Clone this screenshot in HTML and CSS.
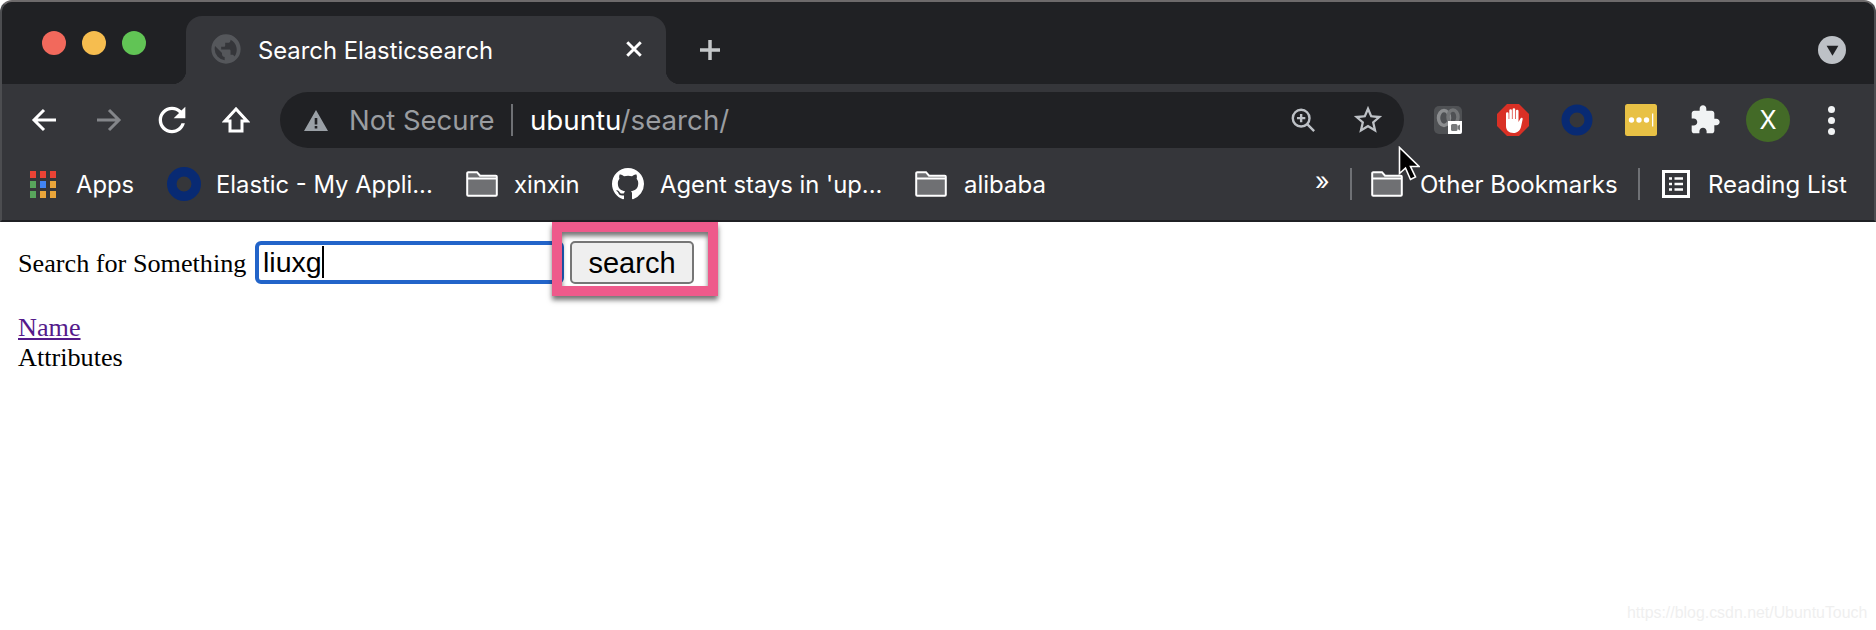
FILE: index.html
```html
<!DOCTYPE html>
<html lang="en">
<head>
<meta charset="utf-8">
<title>Search Elasticsearch</title>
<link rel="stylesheet" href="styles.css">
</head>
<body>
<div class="chrome">
  <div class="tabstrip">
    <div class="lights"><i class="light red"></i><i class="light yellow"></i><i class="light green"></i></div>
    <div class="tab">
      <svg class="globe" viewBox="0 0 24 24"><path fill="#55575b" d="M12 1a11 11 0 1 0 0 22 11 11 0 0 0 0-22zM3.500 12c0-.8.1-1.500.3-2.200L9 15v1c0 1.100.9 2 2 2v2.400A8.500 8.500 0 0 1 3.500 12zm14.800 5.700c-.3-.8-1-1.300-1.900-1.300h-1v-3c0-.6-.4-1-1-1H8.400v-2h2c.6 0 1-.4 1-1v-2h2c1.100 0 2-.9 2-2v-.4a8.500 8.500 0 0 1 2.900 12.700z"/></svg>
      <span class="tab-title">Search Elasticsearch</span>
      <svg class="tab-close" viewBox="0 0 16 16"><path d="M2 2l12 12M14 2L2 14"/></svg>
    </div>
    <svg class="new-tab" viewBox="0 0 24 24"><path d="M12 2v20M2 12h20"/></svg>
    <div class="tab-menu"><svg viewBox="0 0 14 14"><path d="M1.500 2.500h11L7 12z"/></svg></div>
  </div>
  <div class="toolbar">
    <svg class="nav" viewBox="0 0 28 28"><path d="M25 14H4M13 4L3 14l10 10"/></svg>
    <svg class="nav dim" viewBox="0 0 28 28"><path d="M3 14h21M15 4l10 10-10 10"/></svg>
    <svg class="nav fill" viewBox="0 0 24 24"><path d="M17.650 6.350C16.200 4.900 14.210 4 12 4c-4.420 0-7.990 3.580-7.990 8s3.570 8 7.990 8c3.730 0 6.840-2.550 7.730-6h-2.080c-.82 2.330-3.040 4-5.650 4-3.310 0-6-2.690-6-6s2.690-6 6-6c1.660 0 3.140.69 4.220 1.780L13 11h7V4l-2.350 2.350z"/></svg>
    <svg class="nav" viewBox="0 0 28 28"><path d="M14 3L3 15h5v10h12V15h5z"/></svg>
    <div class="omnibox">
      <svg class="warn" viewBox="0 0 24 24"><path d="M12 2L0 23h24L12 2zm-1.300 8h2.600v6.500h-2.600V10zm0 8h2.600v2.500h-2.600V18z" fill-rule="evenodd"/></svg>
      <span class="not-secure">Not Secure</span>
      <i class="omni-sep"></i>
      <span class="url"><b>ubuntu</b>/search/</span>
      <svg class="omni-zoom" viewBox="0 0 28 28"><circle cx="12" cy="12" r="9"/><path d="M18.500 18.500L26 26M12 7.500v9M7.500 12h9"/></svg>
      <svg class="omni-star" viewBox="0 0 24 24"><path d="M22 9.240l-7.190-.62L12 2 9.190 8.630 2 9.240l5.460 4.730L5.820 21 12 17.270 18.180 21l-1.630-7.030L22 9.240zM12 15.400l-3.760 2.270 1-4.280-3.320-2.880 4.380-.38L12 6.100l1.710 4.040 4.380.38-3.320 2.880 1 4.280L12 15.400z"/></svg>
    </div>
    <div class="extensions">
      <div class="ext meet">
        <svg viewBox="0 0 32 32"><rect x="2" y="2" width="28" height="28" rx="5" fill="#4f5154"/><ellipse cx="12" cy="14" rx="5.500" ry="7.500" fill="none" stroke="#8b8d8f" stroke-width="3.500"/><ellipse cx="21" cy="13" rx="5" ry="7" fill="none" stroke="#737577" stroke-width="3.500"/><path d="M16 17h14v11a2 2 0 0 1-2 2H16z" fill="#fff"/><rect x="19" y="20" width="6.500" height="7" rx="1.500" fill="#77797b"/><path d="M25.500 22l2.500-1.500v6l-2.500-1.500z" fill="#77797b"/></svg>
      </div>
      <div class="ext">
        <svg viewBox="0 0 32 32"><path d="M10 0h12l10 10v12L22 32H10L0 22V10z" fill="#d93025"/><path d="M9 17V9.500a1.300 1.300 0 0 1 2.600 0V15h.7V6.500a1.300 1.300 0 0 1 2.600 0V15h.7V5.500a1.300 1.300 0 0 1 2.600 0V15h.7V7a1.300 1.300 0 0 1 2.600 0v11l2-3.500c.8-1.300 2.700-.4 2.100 1L24 23c-1 3.500-3.500 6-7.500 6-5 0-7.500-3-7.500-7z" fill="#fff"/></svg>
      </div>
      <div class="ext">
        <svg viewBox="0 0 32 32"><circle cx="16" cy="16" r="11.500" fill="none" stroke="#082a73" stroke-width="8"/></svg>
      </div>
      <div class="ext">
        <svg viewBox="0 0 32 32"><rect width="32" height="32" rx="2.500" fill="#e8c145"/><circle cx="6.500" cy="16" r="2.700" fill="#fff"/><circle cx="14" cy="16" r="2.700" fill="#fff"/><circle cx="21.500" cy="16" r="2.700" fill="#fff"/><rect x="27" y="9.500" width="1.300" height="13" fill="#fff"/></svg>
      </div>
      <div class="ext">
        <svg viewBox="0 0 24 24"><path fill="#f1f3f4" d="M20.500 11H19V7c0-1.100-.9-2-2-2h-4V3.500C13 2.120 11.880 1 10.500 1S8 2.120 8 3.500V5H4c-1.100 0-1.990.9-1.990 2v3.800H3.500c1.490 0 2.700 1.210 2.700 2.700s-1.210 2.700-2.700 2.700H2V20c0 1.100.9 2 2 2h3.800v-1.500c0-1.490 1.210-2.700 2.700-2.700 1.490 0 2.700 1.210 2.700 2.700V22H17c1.100 0 2-.9 2-2v-4h1.500c1.380 0 2.500-1.120 2.500-2.500S21.880 11 20.500 11z"/></svg>
      </div>
      <div class="avatar">X</div>
      <div class="kebab"><i></i><i></i><i></i></div>
    </div>
  </div>
  <div class="bookmarks">
    <div class="apps-grid">
      <i class="r"></i><i class="r"></i><i class="r"></i>
      <i class="g"></i><i class="b"></i><i class="y"></i>
      <i class="g"></i><i class="y"></i><i class="y"></i>
    </div>
    <span class="bm-label apps-label">Apps</span>
    <svg class="bm-ico elastic" viewBox="0 0 32 32"><circle cx="16" cy="16" r="11.500" fill="none" stroke="#082a73" stroke-width="9"/></svg>
    <span class="bm-label elastic-label">Elastic - My Appli...</span>
    <svg class="bm-ico folder" viewBox="0 0 32 26"><path d="M1.200 2.200a1 1 0 0 1 1-1H11l3 3.500h15.800a1 1 0 0 1 1 1v18a1 1 0 0 1-1 1H2.200a1 1 0 0 1-1-1z" fill="#6f7073" stroke="#fff" stroke-width="2"/><path d="M1.200 7.500h29.600" stroke="#fff" stroke-width="2"/></svg>
    <span class="bm-label xinxin-label">xinxin</span>
    <svg class="bm-ico github" viewBox="0 0 16 16"><path fill="#fff" d="M8 0C3.580 0 0 3.580 0 8c0 3.540 2.290 6.530 5.470 7.590.4.070.55-.17.55-.38 0-.19-.01-.82-.01-1.490-2.010.37-2.530-.49-2.690-.94-.09-.23-.48-.94-.82-1.130-.28-.15-.68-.52-.01-.53.63-.01 1.080.58 1.230.82.72 1.210 1.870.87 2.330.66.070-.52.28-.87.51-1.070-1.780-.2-3.640-.89-3.640-3.950 0-.87.31-1.590.82-2.150-.08-.2-.36-1.020.08-2.120 0 0 .67-.21 2.200.82.64-.18 1.320-.27 2-.27.68 0 1.360.09 2 .27 1.530-1.040 2.200-.82 2.200-.82.44 1.100.16 1.920.08 2.120.51.56.82 1.270.82 2.150 0 3.070-1.870 3.750-3.650 3.950.29.25.54.73.54 1.480 0 1.070-.01 1.930-.01 2.200 0 .21.15.46.55.38A8.013 8.013 0 0 0 16 8c0-4.420-3.580-8-8-8z"/></svg>
    <span class="bm-label agent-label">Agent stays in 'up...</span>
    <svg class="bm-ico folder" viewBox="0 0 32 26"><path d="M1.200 2.200a1 1 0 0 1 1-1H11l3 3.500h15.800a1 1 0 0 1 1 1v18a1 1 0 0 1-1 1H2.200a1 1 0 0 1-1-1z" fill="#6f7073" stroke="#fff" stroke-width="2"/><path d="M1.200 7.500h29.600" stroke="#fff" stroke-width="2"/></svg>
    <span class="bm-label alibaba-label">alibaba</span>
    <span class="chevrons">»</span>
    <i class="bm-sep"></i>
    <svg class="bm-ico folder" viewBox="0 0 32 26"><path d="M1.200 2.200a1 1 0 0 1 1-1H11l3 3.500h15.800a1 1 0 0 1 1 1v18a1 1 0 0 1-1 1H2.200a1 1 0 0 1-1-1z" fill="#6f7073" stroke="#fff" stroke-width="2"/><path d="M1.200 7.500h29.600" stroke="#fff" stroke-width="2"/></svg>
    <span class="bm-label other-label">Other Bookmarks</span>
    <i class="bm-sep second"></i>
    <svg class="bm-ico reading" viewBox="0 0 28 28"><rect x="1.500" y="1.500" width="25" height="25" fill="none" stroke="#fff" stroke-width="3"/><path d="M7 8.500h3M12.500 8.500H21M7 14h3M12.500 14H21M7 19.500h3M12.500 19.500H21" stroke="#fff" stroke-width="2.400"/></svg>
    <span class="bm-label reading-label">Reading List</span>
  </div>
</div>
<main class="page">
  <form class="search-row">
    <label class="search-label">Search for Something</label>
    <div class="search-input">liuxg<i class="caret"></i></div>
    <div class="highlight"></div>
    <button class="search-btn" type="button">search</button>
  </form>
  <a class="name-link" href="#">Name</a>
  <div class="attrs">Attributes</div>
</main>
<svg class="cursor" viewBox="0 0 22 36"><path d="M1.500 1.500v26l6-5.500 5 11.500 5-2.500-5-10.500h8.500z" fill="#000" stroke="#fff" stroke-width="1.600"/></svg>
<div class="watermark">https://blog.csdn.net/UbuntuTouch</div>
</body>
</html>
```
FILE: styles.css
```css
* { box-sizing: border-box; }
html, body { margin: 0; padding: 0; background: #fff; }
body { width: 1876px; height: 630px; overflow: hidden; position: relative; font-family: "Liberation Serif", serif; }
i { display: block; }

.chrome { background: #35363a; font-family: Inter, "Liberation Sans", sans-serif; border-left: 2px solid #4c4d50; border-right: 2px solid #4c4d50; border-top: 2px solid #6d6a6b; border-radius: 12px 12px 0 0; height: 222px; border-bottom: 2px solid #1f2024; overflow: hidden; }

.tabstrip { height: 82px; background: #202124; display: flex; align-items: flex-start; }
.lights { display: flex; gap: 16px; margin: 29px 0 0 40px; width: 144px; }
.light { width: 24px; height: 24px; border-radius: 50%; }
.red { background: #f2695c; }
.yellow { background: #f6bd4f; }
.green { background: #61c455; }

.tab { width: 480px; height: 68px; margin-top: 14px; background: #35363a; border-radius: 16px 16px 0 0; display: flex; align-items: center; padding: 0 0 0 24px; position: relative; }
.tab::before, .tab::after { content: ""; position: absolute; bottom: 0; width: 14px; height: 14px; }
.tab::before { left: -14px; background: radial-gradient(circle at 0 0, transparent 14px, #35363a 14.5px); }
.tab::after { right: -14px; background: radial-gradient(circle at 100% 0, transparent 14px, #35363a 14.5px); }
.globe { width: 32px; height: 32px; flex: none; margin-bottom: 2px; }
.tab-title { color: #fff; font-size: 23.800px; margin-left: 16px; white-space: nowrap; width: 367px; flex: none; }
.tab-close { width: 18px; height: 18px; fill: none; stroke: #fff; stroke-width: 2.600; flex: none; margin-bottom: 2px; }
.new-tab { width: 24px; height: 24px; margin: 36px 0 0 32px; fill: none; stroke: #c4c7c9; stroke-width: 3.500; flex: none; }
.tab-menu { width: 28px; height: 28px; background: #bdc1c6; border-radius: 50%; margin: 34px 0 0 1096px; display: flex; align-items: center; justify-content: center; flex: none; }
.tab-menu svg { width: 15px; height: 15px; fill: #202124; }

.toolbar { height: 84px; display: flex; align-items: center; padding: 0 0 12px 29px; }
.nav { width: 28px; height: 28px; margin-right: 35px; fill: none; stroke: #fff; stroke-width: 3; flex: none; }
.nav.dim { stroke: #84868a; margin-right: 36px; }
.nav.fill { fill: #fff; stroke: none; width: 40px; height: 40px; margin: 0 33px 0 -6px; }
.nav:nth-child(4) { margin-right: 0; margin-left: -3px; }
.omnibox { width: 1124px; height: 56px; margin-left: 30px; background: #202124; border-radius: 28px; display: flex; align-items: center; padding-left: 24px; flex: none; }
.warn { width: 24px; height: 24px; fill: #9aa0a6; flex: none; }
.not-secure { color: #9a9da1; font-size: 27.500px; margin-left: 21px; white-space: nowrap; width: 146px; flex: none; }
.omni-sep { width: 2px; height: 32px; background: #6f7175; margin-left: 16px; flex: none; }
.url { color: #9a9da1; font-size: 27.700px; margin-left: 17px; white-space: nowrap; width: 746px; flex: none; }
.url b { color: #fff; font-weight: 400; }
.omni-zoom { width: 26px; height: 26px; fill: none; stroke: #bdc1c6; stroke-width: 2.600; flex: none; margin-left: 14px; }
.omni-star { width: 34px; height: 34px; fill: #bdc1c6; flex: none; margin-left: 35px; }

.extensions { display: flex; align-items: center; margin-left: 28px; }
.ext { width: 64px; height: 32px; display: flex; justify-content: flex-start; flex: none; }
.ext svg { width: 32px; height: 32px; }
.ext.meet { width: 65px; }
.avatar { width: 44px; height: 44px; border-radius: 50%; background: #436a27; color: #fff; font-size: 25px; display: flex; align-items: center; justify-content: center; flex: none; margin-left: -7px; }
.kebab { display: flex; flex-direction: column; gap: 4px; margin-left: 38px; flex: none; }
.kebab i { width: 7px; height: 7px; border-radius: 50%; background: #f1f3f4; }

.bookmarks { height: 52px; display: flex; align-items: center; padding: 0 0 20px 28px; }
.bm-label { color: #fff; font-size: 23.800px; white-space: nowrap; flex: none; }
.bm-ico { flex: none; }
.apps-grid { display: grid; grid-template-columns: repeat(3, 6px); grid-auto-rows: 7px; gap: 3px 4px; width: 26px; flex: none; }
.apps-grid i { width: 6px; height: 7px; }
.apps-grid .r { background: #ea4335; }
.apps-grid .g { background: #58a55c; }
.apps-grid .b { background: #4285f4; }
.apps-grid .y { background: #e9a53a; }
.apps-label { margin-left: 20px; width: 58px; }
.elastic { width: 34px; height: 34px; margin-left: 33px; }
.elastic-label { margin-left: 15px; width: 216px; }
.folder { width: 32px; height: 26px; margin-left: 34px; }
.xinxin-label { margin-left: 16px; width: 64px; }
.github { width: 32px; height: 32px; margin-left: 34px; }
.agent-label { margin-left: 16px; width: 221px; }
.alibaba-label { margin-left: 17px; width: 81px; font-size: 24px; }
.chevrons { color: #fff; font-size: 25px; margin-left: 270px; width: 16px; flex: none; line-height: 1; padding-bottom: 5px; }
.bm-sep { width: 2px; height: 32px; background: #6f7175; margin-left: 19px; flex: none; }
.bm-sep + .folder { margin-left: 19px; }
.other-label { margin-left: 17px; width: 196px; font-size: 24px; }
.bm-sep.second { margin-left: 22px; }
.reading { width: 28px; height: 28px; margin-left: 22px; }
.reading-label { margin-left: 18px; width: 138px; font-size: 24px; }

.page { padding: 18px 0 0 18px; font-size: 26.200px; line-height: 30px; color: #000; }
.search-row { display: flex; align-items: center; height: 44px; position: relative; margin-bottom: 29px; }
.search-label { width: 237px; flex: none; padding-top: 3px; }
.search-input { width: 309px; height: 43px; border: 4px solid #2264c9; border-radius: 6px; font-family: "Liberation Sans", sans-serif; font-size: 28.500px; line-height: 34px; padding-left: 4px; display: flex; align-items: center; flex: none; }
.caret { width: 2px; height: 32px; background: #000; }
.search-btn { width: 124px; height: 43px; margin-left: 6px; border: 2px solid #767676; border-radius: 5px; background: #efefef; font-family: "Liberation Sans", sans-serif; font-size: 29px; color: #000; padding: 2px 0 0; flex: none; position: relative; }
.highlight { position: absolute; left: 534px; top: -18px; width: 166px; height: 74px; border: solid #ee5a8b; border-width: 10px; box-shadow: 0 4px 5px rgba(0,0,0,.55), inset 0 4px 5px rgba(0,0,0,.55); }
.name-link { color: #551a8b; text-decoration: underline; display: block; width: max-content; }
.attrs { display: block; }

.cursor { position: absolute; left: 1398px; top: 146px; width: 22px; height: 36px; }
.watermark { position: absolute; left: 1627px; top: 604px; font-family: "Liberation Sans", sans-serif; font-size: 15.900px; color: #efefef; white-space: nowrap; }
```
